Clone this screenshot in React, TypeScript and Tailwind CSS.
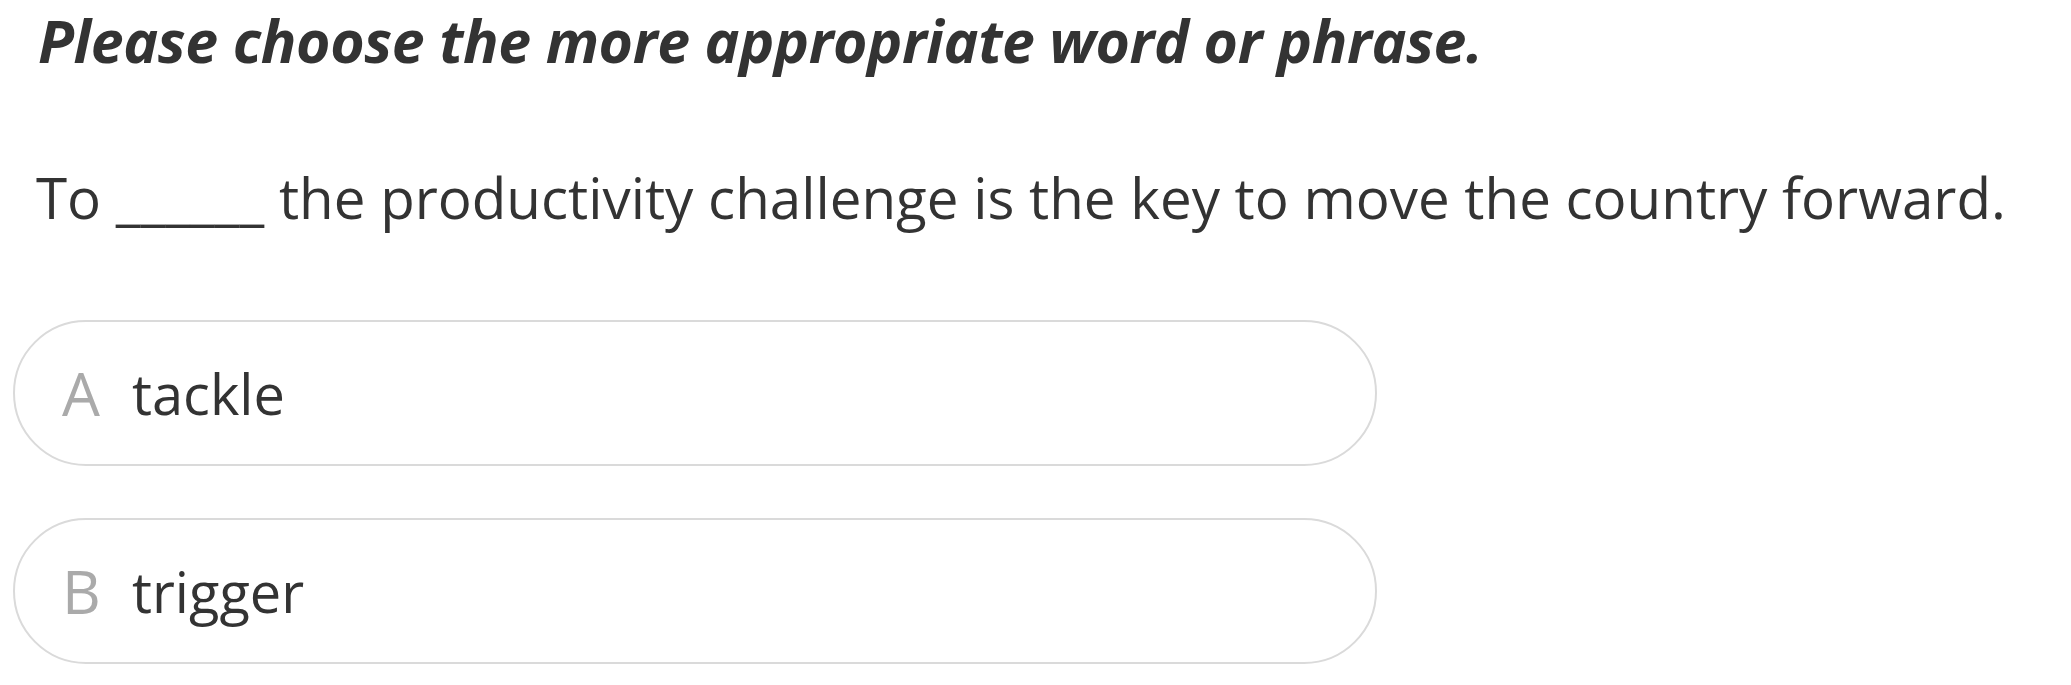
import React from 'react';

const options = [
  { key: 'A', text: 'tackle' },
  { key: 'B', text: 'trigger' },
];

export default function App() {
  return (
    <div
      className="w-[2071px] h-[685px] bg-white text-[#333] overflow-hidden"
      style={{ fontFamily: '"Open Sans", "Noto Sans", sans-serif' }}
    >
      {/* Instruction */}
      <h1 className="pl-[38px] pr-[20px] text-[59px] leading-[80px] font-bold italic tracking-[-0.4px] whitespace-nowrap">
        Please choose the more appropriate word or phrase.
      </h1>

      {/* Question */}
      <p className="pl-[36px] mt-[82px] text-[56.5px] leading-[72px]">
        To ______ the productivity challenge is the key to move the country forward.
      </p>

      {/* Options */}
      <div className="mt-[86px] pl-[13px] flex flex-col gap-[52px]">
        {options.map((o) => (
          <div
            key={o.key}
            className="w-[1364px] h-[146px] rounded-full border-2 border-[#dadada] flex items-center pl-[47px]"
          >
            <span className="text-[#aaa] text-[60px] w-[70px]">{o.key}</span>
            <span className="text-[56px]">{o.text}</span>
          </div>
        ))}
      </div>
    </div>
  );
}
